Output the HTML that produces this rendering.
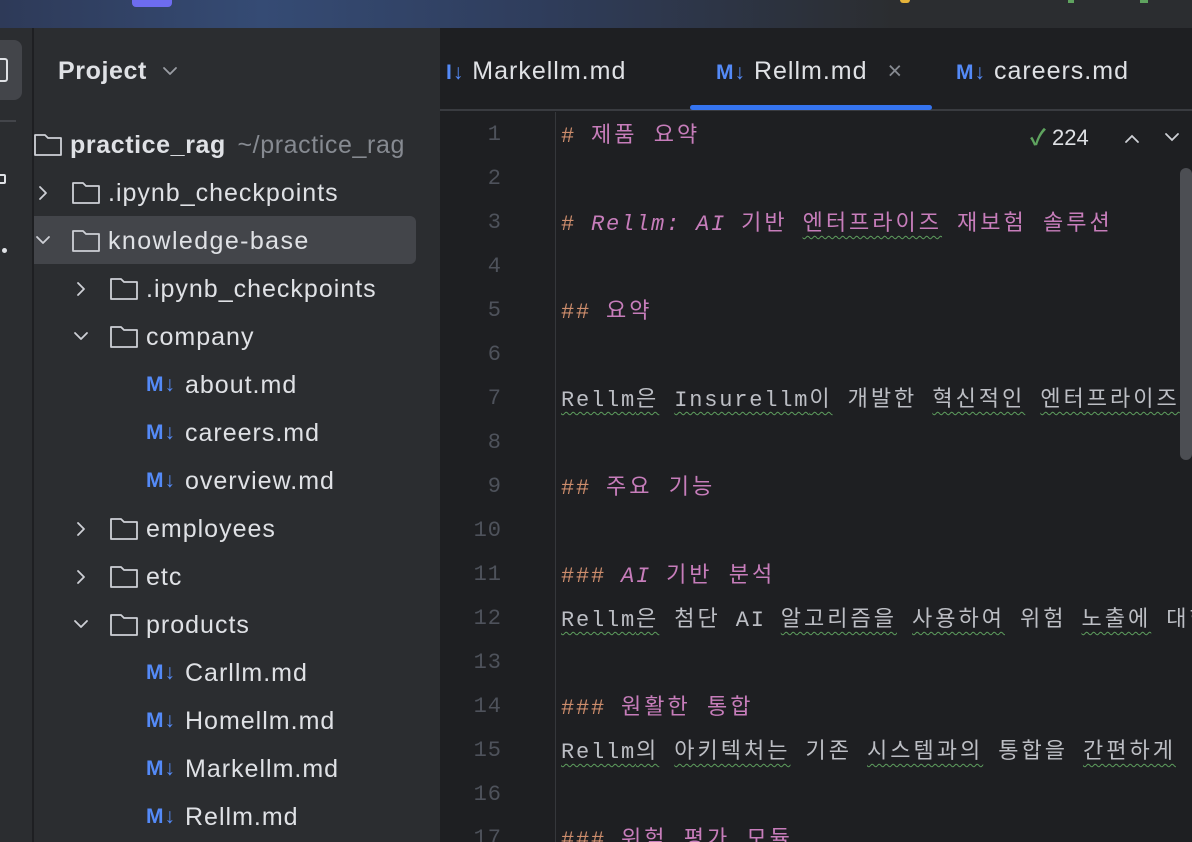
<!DOCTYPE html>
<html><head><meta charset="utf-8"><style>
*{margin:0;padding:0;box-sizing:border-box}
html,body{width:1192px;height:842px;overflow:hidden}
body{background:#1e1f22;position:relative;font-family:"Liberation Sans","Noto Sans CJK KR",sans-serif}
.top{position:absolute;left:0;top:0;width:1192px;height:28px;background:linear-gradient(90deg,#2e3a58 0%,#354b74 22%,#2f3d5c 45%,#2b2d30 75%,#2b2d30 100%)}
.strip{position:absolute;left:0;top:28px;width:33px;height:814px;background:#2b2d30;border-right:1px solid #1e1f22}
.side{position:absolute;left:34px;top:28px;width:406px;height:814px;background:#2b2d30}
.row{position:absolute;height:48px;line-height:48px;font-size:25px;letter-spacing:1px;color:#dfe1e5;white-space:nowrap}
.md{position:absolute;font-weight:bold;color:#548af7;font-size:21px;line-height:48px;letter-spacing:1px}
.tabs{position:absolute;left:440px;top:28px;width:752px;height:83px;background:#1e1f22;border-bottom:2px solid #393b40}
.tab{position:absolute;top:28px;font-size:25px;letter-spacing:1px;line-height:30px;color:#dfe1e5;white-space:nowrap}
.ln{position:absolute;width:62px;left:440px;text-align:right;font-family:"Liberation Mono",monospace;font-size:22px;letter-spacing:1px;color:#4e525b;line-height:44px}
.code{position:absolute;left:561px;font-family:"Liberation Mono","Noto Sans CJK KR",monospace;font-size:22px;letter-spacing:1.8px;color:#bcbec4;line-height:44px;white-space:nowrap}
.k{letter-spacing:3px}
.h{color:#cf8e6d}.p{color:#c77dbb}.i{font-style:italic}
.w{text-decoration:underline wavy #5e9e5e;text-decoration-thickness:1px;text-underline-offset:5px}
</style></head><body>
<div class="top"><div style="position:absolute;left:132px;top:0;width:40px;height:7px;background:#6d6cf0;border-radius:0 0 4px 4px"></div>
<div style="position:absolute;left:900px;top:0;width:10px;height:3px;background:#e5b33a;border-radius:0 0 4px 4px"></div>
<div style="position:absolute;left:1068px;top:0;width:6px;height:3px;background:#5fa35f"></div>
<div style="position:absolute;left:1140px;top:0;width:8px;height:3px;background:#5fa35f"></div></div>
<div class="strip">
<div style="position:absolute;left:-10px;top:12px;width:32px;height:60px;background:#43454a;border-radius:8px"></div>
<div style="position:absolute;left:-6px;top:30px;width:14px;height:24px;border:2.5px solid #dfe1e5;border-radius:3px"></div>
<div style="position:absolute;left:0;top:92px;width:16px;height:2px;background:#43454a"></div>
<div style="position:absolute;left:-4px;top:146px;width:10px;height:10px;border:2px solid #dfe1e5;border-radius:2px"></div>
<div style="position:absolute;left:2px;top:220px;width:5px;height:5px;background:#dfe1e5;border-radius:50%"></div>
</div>
<div class="side">
<div class="row" style="left:24px;top:19px;font-weight:bold;letter-spacing:0.6px">Project</div>
<div style="position:absolute;left:0;top:188px;width:382px;height:48px;background:#43454a;border-radius:0 6px 6px 0"></div>
</div>
<svg style="position:absolute;left:0;top:0" width="440" height="842">
<g fill="none" stroke="#ced0d6" stroke-width="1.8" stroke-linejoin="round" stroke-linecap="round">
<path d="M164 68l6 6 6-6" stroke="#9a9da3"/>
<path d="M35 135h10l3 3h13v17h-26z"/>
<path d="M73 183h10l3 3h13v17h-26z"/>
<path d="M73 231h10l3 3h13v17h-26z"/>
<path d="M111 279h10l3 3h13v17h-26z"/>
<path d="M111 327h10l3 3h13v17h-26z"/>
<path d="M111 519h10l3 3h13v17h-26z"/>
<path d="M111 567h10l3 3h13v17h-26z"/>
<path d="M111 615h10l3 3h13v17h-26z"/>
<path d="M40 187l6 6-6 6"/>
<path d="M37 237l6 6 6-6"/>
<path d="M78 283l6 6-6 6"/>
<path d="M75 333l6 6 6-6"/>
<path d="M78 523l6 6-6 6"/>
<path d="M78 571l6 6-6 6"/>
<path d="M75 621l6 6 6-6"/>
</g></svg>
<div class="row" style="left:70px;top:121px;font-weight:bold;letter-spacing:0.6px">practice_rag <span style="font-weight:normal;color:#868a91;margin-left:4px">~/practice_rag</span></div>
<div class="row" style="left:108px;top:169px">.ipynb_checkpoints</div>
<div class="row" style="left:108px;top:217px;letter-spacing:1.4px">knowledge-base</div>
<div class="row" style="left:146px;top:265px">.ipynb_checkpoints</div>
<div class="row" style="left:146px;top:313px">company</div>
<div class="md" style="left:146px;top:361px">M↓</div><div class="row" style="left:185px;top:361px">about.md</div>
<div class="md" style="left:146px;top:409px">M↓</div><div class="row" style="left:185px;top:409px">careers.md</div>
<div class="md" style="left:146px;top:457px">M↓</div><div class="row" style="left:185px;top:457px">overview.md</div>
<div class="row" style="left:146px;top:505px">employees</div>
<div class="row" style="left:146px;top:553px">etc</div>
<div class="row" style="left:146px;top:601px">products</div>
<div class="md" style="left:146px;top:649px">M↓</div><div class="row" style="left:185px;top:649px">Carllm.md</div>
<div class="md" style="left:146px;top:697px">M↓</div><div class="row" style="left:185px;top:697px">Homellm.md</div>
<div class="md" style="left:146px;top:745px">M↓</div><div class="row" style="left:185px;top:745px">Markellm.md</div>
<div class="md" style="left:146px;top:793px">M↓</div><div class="row" style="left:185px;top:793px">Rellm.md</div>

<div class="tabs">
<div class="tab" style="left:6px"><span style="color:#548af7;font-weight:bold;font-size:21px">I↓</span> Markellm.md</div>
<div class="tab" style="left:276px"><span style="color:#548af7;font-weight:bold;font-size:21px">M↓</span> Rellm.md <span style="color:#868a91;margin-left:12px">×</span></div>
<div class="tab" style="left:516px"><span style="color:#548af7;font-weight:bold;font-size:21px">M↓</span> careers.md</div>
<div style="position:absolute;left:250px;top:77px;width:242px;height:5px;background:#3574f0;border-radius:3px"></div>
</div>
<div style="position:absolute;left:555px;top:112px;width:1px;height:730px;background:#35373b"></div>
<div style="position:absolute;left:1180px;top:168px;width:12px;height:292px;background:#4c4e53;border-radius:6px"></div>
<div style="position:absolute;left:1030px;top:123px;font-size:22px;color:#dfe1e5;line-height:30px;white-space:nowrap"><span style="color:#5fa35f;font-weight:bold">✓</span> 224</div>
<svg style="position:absolute;left:1120px;top:128px" width="64" height="20"><g fill="none" stroke="#ced0d6" stroke-width="1.8" stroke-linecap="round"><path d="M6 14l6-6 6 6"/><path d="M46 6l6 6 6-6"/></g></svg>

<div class="ln" style="top:113px">1</div><div class="ln" style="top:157px">2</div><div class="ln" style="top:201px">3</div><div class="ln" style="top:245px">4</div><div class="ln" style="top:289px">5</div><div class="ln" style="top:333px">6</div><div class="ln" style="top:377px">7</div><div class="ln" style="top:421px">8</div><div class="ln" style="top:465px">9</div><div class="ln" style="top:509px">10</div><div class="ln" style="top:553px">11</div><div class="ln" style="top:597px">12</div><div class="ln" style="top:641px">13</div><div class="ln" style="top:685px">14</div><div class="ln" style="top:729px">15</div><div class="ln" style="top:773px">16</div><div class="ln" style="top:817px">17</div>

<div class="code" style="top:115px"><span class="h">#</span> <span class="p k">제품 요약</span></div>
<div class="code" style="top:203px"><span class="h">#</span> <span class="p"><span class="i">Rellm: AI</span> <span class="k">기반</span> <span class="w k">엔터프라이즈</span> <span class="k">재보험 솔루션</span></span></div>
<div class="code" style="top:291px"><span class="h">##</span> <span class="p k">요약</span></div>
<div class="code" style="top:379px"><span class="w">Rellm<span class="k">은</span></span> <span class="w">Insurellm<span class="k">이</span></span> <span class="k">개발한</span> <span class="w k">혁신적인</span> <span class="w k">엔터프라이즈</span></div>
<div class="code" style="top:467px"><span class="h">##</span> <span class="p k">주요 기능</span></div>
<div class="code" style="top:555px"><span class="h">###</span> <span class="p"><span class="i">AI</span> <span class="k">기반 분석</span></span></div>
<div class="code" style="top:599px"><span class="w">Rellm<span class="k">은</span></span> <span class="k">첨단</span> AI <span class="w k">알고리즘을</span> <span class="w k">사용하여</span> <span class="k">위험</span> <span class="w k">노출에</span> <span class="k">대한</span></div>
<div class="code" style="top:687px"><span class="h">###</span> <span class="p k">원활한 통합</span></div>
<div class="code" style="top:731px"><span class="w">Rellm<span class="k">의</span></span> <span class="w k">아키텍처는</span> <span class="k">기존</span> <span class="w k">시스템과의</span> <span class="k">통합을</span> <span class="w k">간편하게</span> <span class="k">지원</span></div>
<div class="code" style="top:819px"><span class="h">###</span> <span class="p k">위험 평가 모듈</span></div>
</body></html>
